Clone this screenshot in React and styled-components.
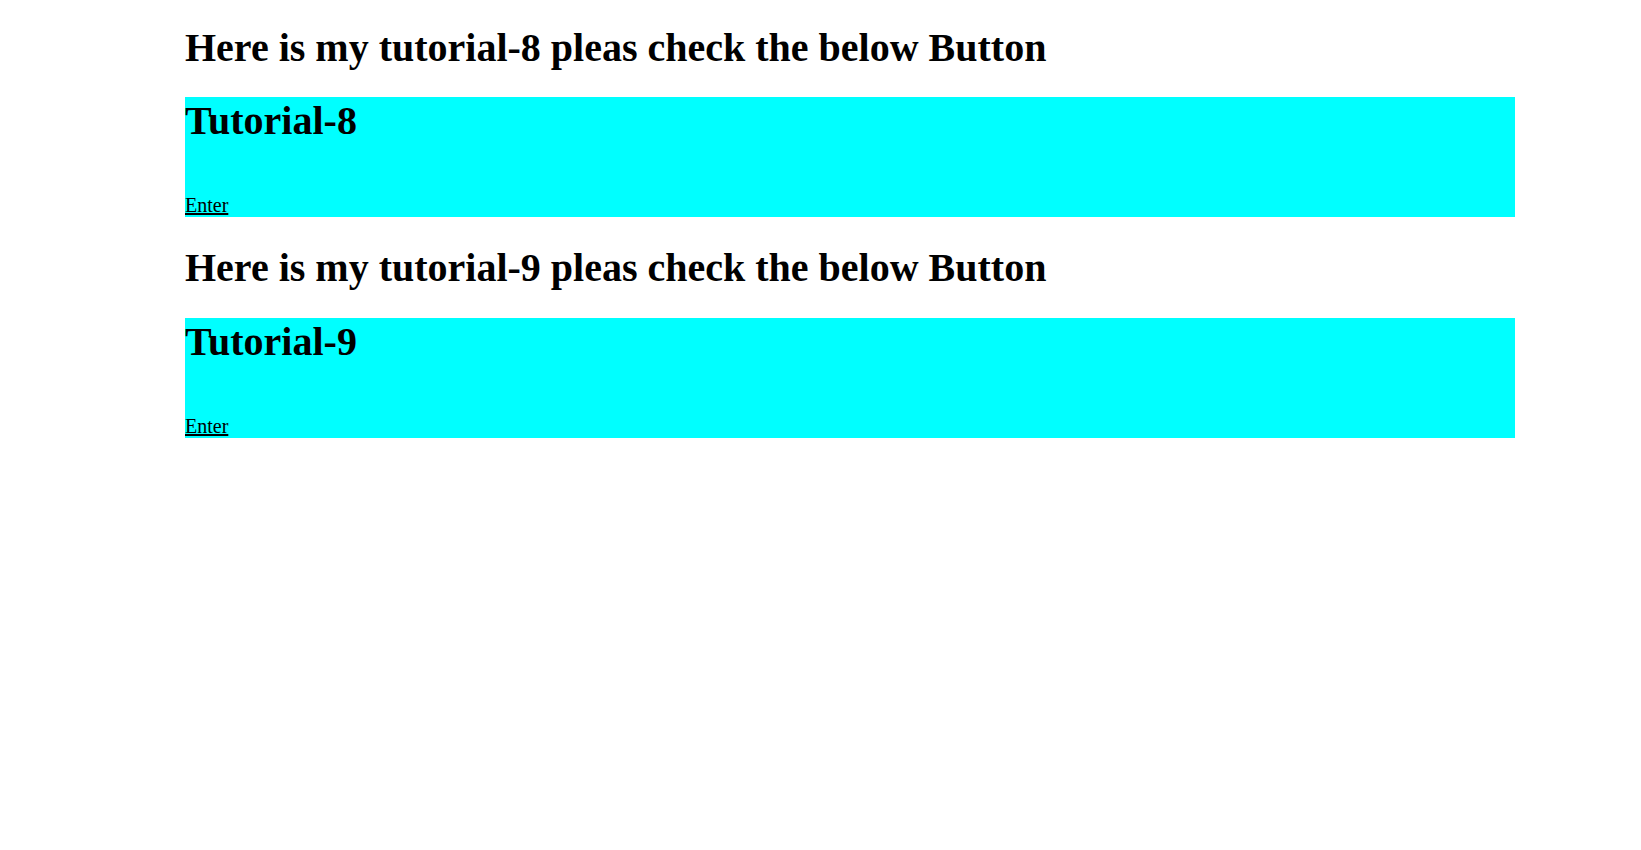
import React from 'react'
import styled, { createGlobalStyle } from 'styled-components'

const GlobalStyle = createGlobalStyle`
    body {
        margin: 0;
        background: #fff;
        font-family: "Liberation Serif", "Times New Roman", serif;
        font-size: 20px;
        color: #000;
    }
`

const tutorials = [8, 9]

const App = () => {
    return (
        <Page>
            <GlobalStyle />
            {tutorials.map((n, i) => (
                <section key={n}>
                    <Title $first={i === 0}>Here is my tutorial-{n} pleas check the below Button</Title>
                    <Card>
                        <CardTitle>Tutorial-{n}</CardTitle>
                        <br />
                        <EnterLink href="#">Enter</EnterLink>
                    </Card>
                </section>
            ))}
        </Page>
    )
}

export default App

const Page = styled.div`
    width: 1330px;
    margin-left: 185px;
    padding-top: 0.1px;
`

const Title = styled.h1`
    font-size: 40px;
    font-weight: bold;
    margin: ${p => (p.$first ? '23.5px' : '26.8px')} 0 26.8px;
`

const Card = styled.div`
    background: #00ffff;
`

const CardTitle = styled.h1`
    font-size: 40px;
    font-weight: bold;
    margin: 0 0 26.8px;
`

const EnterLink = styled.a`
    color: #000;
    text-decoration: underline;
`
